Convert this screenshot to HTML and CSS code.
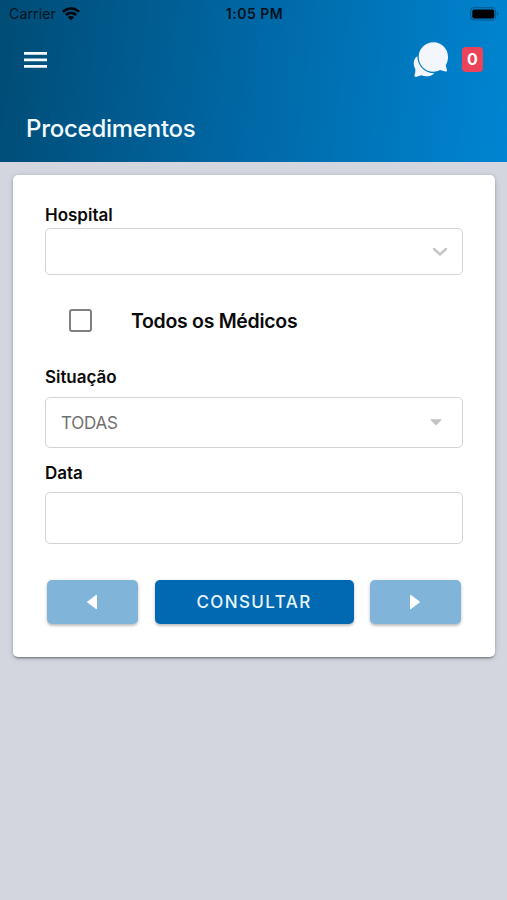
FILE: index.html
```html
<!DOCTYPE html>
<html lang="pt-BR">
<head>
<meta charset="utf-8">
<title>Procedimentos</title>
<link rel="stylesheet" href="styles.css">
</head>
<body>
<header class="header">
  <div class="status">
    <div class="carrier"><span class="carrier-name">Carrier</span>
      <svg class="wifi" width="18" height="14" viewBox="0 0 18 14" fill="none" stroke="#03080c" stroke-width="2.5"><path d="M.8 4.800Q9-2 17.200 4.800"/><path d="M3.800 8Q9 3.700 14.200 8"/><path d="M9 13.200L5.800 10.200Q9 7.600 12.200 10.200Z" fill="#03080c" stroke="none"/></svg>
    </div>
    <span class="clock">1:05 PM</span>
    <svg class="battery" width="30" height="14" viewBox="0 0 30 14"><rect x=".7" y=".7" width="25" height="12.300" rx="3.200" fill="none" stroke="#03324f" stroke-opacity=".5"/><rect x="2.300" y="2.400" width="22" height="9" rx="2" fill="#000"/><path d="M27.300 4.800Q29.600 6.800 27.300 8.800Z" fill="#03324f" fill-opacity=".6"/></svg>
  </div>
  <div class="toolbar">
    <svg class="menu" width="23" height="16" viewBox="0 0 23 16" fill="#f3fbff"><path d="M0 0h23v2.700H0zM0 6.600h23v2.700H0zM0 13.100h23v2.700H0z"/></svg>
    <div class="messages">
      <svg width="36" height="36" viewBox="0 0 36 36" fill="#f3f6fc"><path d="M4.300 14.200C.5 16.500-.3 22.200 2 26.500C2.800 28 2.300 30.200 1.500 33.200C1.200 34.600 2.300 35.200 3.600 34.700L8.200 33.200C12.500 35.200 19 34.500 21.300 31.200C12 31.200 4.600 24 4.300 14.200Z"/><path d="M20.500.3C12.200.3 5.700 6.700 5.700 14.900C5.700 23.200 12.200 29.700 20.400 29.700C22.800 29.700 25 29 27 28L32.400 29.500C33.600 29.800 34.200 29.200 33.900 28L32.800 23C34.300 20.700 35 17.800 35 14.900C35 6.700 28.700.3 20.500.3Z"/></svg>
      <span class="badge">0</span>
    </div>
  </div>
  <h1 class="title">Procedimentos</h1>
</header>
<main class="card">
  <div class="label">Hospital</div>
  <div class="field field-hospital"><svg width="16" height="10" viewBox="0 0 16 10" fill="none" stroke="#c8c8c8" stroke-width="2.400" stroke-linecap="round" stroke-linejoin="round"><path d="M2 2l6 5.500L14 2"/></svg></div>
  <div class="check-row"><span class="checkbox"></span><span class="check-text">Todos os Médicos</span></div>
  <div class="label situation">Situação</div>
  <div class="field field-status"><span class="value">TODAS</span><svg width="12" height="7" viewBox="0 0 12 7" fill="#c1c1c1"><path d="M0 .2h12L6 6.500z"/></svg></div>
  <div class="label">Data</div>
  <div class="field field-date"></div>
  <div class="actions">
    <div class="button light"><svg width="10" height="16" viewBox="0 0 10 16" fill="#fff"><path d="M10 1.500Q10 .4 9 .9L.4 7.400Q-.2 8 .4 8.600L9 15.100Q10 15.600 10 14.500Z"/></svg></div>
    <div class="button primary"><span>CONSULTAR</span></div>
    <div class="button light"><svg width="10" height="16" viewBox="0 0 10 16" fill="#fff"><path d="M0 1.500Q0 .4 1 .9L9.600 7.400Q10.200 8 9.600 8.600L1 15.100Q0 15.600 0 14.500Z"/></svg></div>
  </div>
</main>
</body>
</html>
```
FILE: styles.css
```css
* { box-sizing: border-box; }
body {
  margin: 0;
  min-height: 900px;
  background: #d3d6df;
  font-family: Inter, "Liberation Sans", sans-serif;
  color: #0a0a0a;
}
svg { display: block; flex: none; }
.header {
  height: 162px;
  background: linear-gradient(97deg, #004c75 0%, #0067a4 48%, #0085d2 100%);
}
.status {
  display: grid;
  grid-template-columns: 1fr auto 1fr;
  align-items: center;
  height: 28px;
  padding: 0 7px 0 9px;
  font-size: 14px;
  line-height: 20px;
  color: #03121c;
}
.carrier { display: flex; align-items: center; gap: 6px; }
.carrier-name { letter-spacing: 0.15px; }
.clock { font-weight: 600; letter-spacing: 0.5px; }
.battery { justify-self: end; }
.toolbar {
  display: flex;
  justify-content: space-between;
  align-items: center;
  height: 63px;
  padding: 0 24px;
}
.messages { display: flex; align-items: center; gap: 13px; }
.badge {
  width: 21px;
  height: 25px;
  border-radius: 4px;
  background: #eb445a;
  color: #fff;
  font-size: 16px;
  font-weight: 700;
  line-height: 24px;
  text-align: center;
}
.title {
  margin: 22px 0 0 26px;
  font-size: 24px;
  font-weight: 500;
  letter-spacing: -0.25px;
  line-height: 32px;
  color: #f3fbff;
}
.card {
  width: 482px;
  height: 482px;
  margin: 13px 0 0 13px;
  padding: 29px 32px 0;
  border-radius: 5px;
  background: #fff;
  box-shadow: 0 3px 2px -2px rgba(0,0,0,.3), 0 1px 3px rgba(0,0,0,.2), 0 1px 6px rgba(0,0,0,.12);
}
.label { height: 22px; font-size: 17px; font-weight: 600; line-height: 22px; }
.situation { letter-spacing: -0.05px; }
.field {
  display: flex;
  align-items: center;
  border: 1.5px solid #d4d4d4;
  border-radius: 5px;
}
.field-hospital { height: 47px; margin-top: 2px; padding-right: 14px; justify-content: flex-end; }
.check-row { display: flex; align-items: center; height: 91px; padding-left: 24px; }
.checkbox { width: 23px; height: 23px; border: 2px solid #808080; border-radius: 3px; }
.check-text { margin-left: 39px; font-size: 19.5px; font-weight: 600; letter-spacing: -0.3px; line-height: 26px; }
.field-status { height: 51px; margin: 9px 0 14px; padding: 0 20px 0 15px; justify-content: space-between; }
.value { font-size: 17px; letter-spacing: -0.2px; color: #717171; }
.field-date { height: 52px; margin-top: 8px; }
.actions {
  display: grid;
  grid-template-columns: 91px 199px 91px;
  justify-content: space-between;
  margin: 36px 2px 0;
}
.button {
  display: flex;
  align-items: center;
  justify-content: center;
  height: 44px;
  padding-right: 1px;
  border-radius: 5px;
  box-shadow: 0 2px 2px rgba(0,0,0,.16), 0 1px 4px rgba(0,0,0,.14);
}
.light { background: #80b4d9; }
.primary { padding: 0; background: #0069b2; color: #e8f5ff; font-size: 17px; font-weight: 500; letter-spacing: 1.4px; }
```
